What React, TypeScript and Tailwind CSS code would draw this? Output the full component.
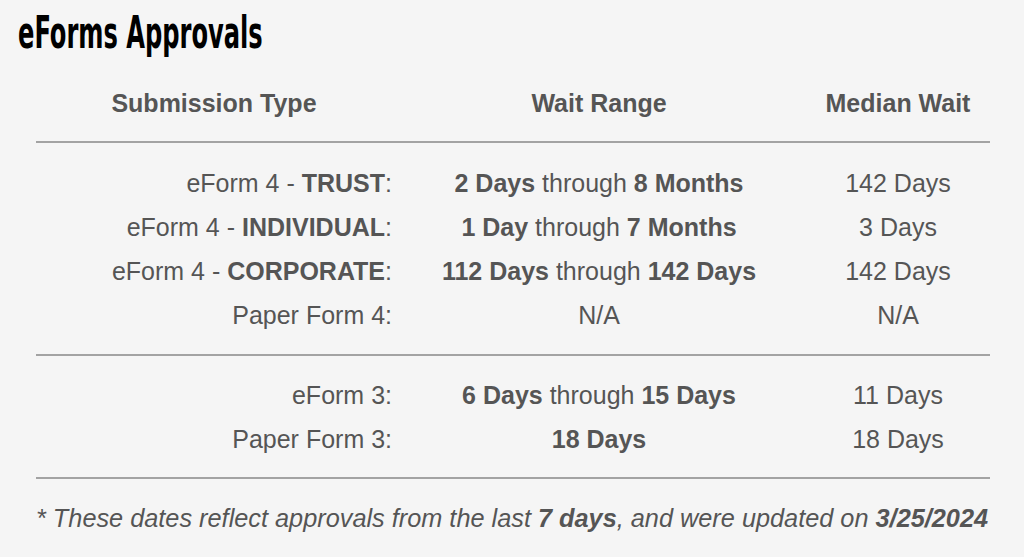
import React from "react";

const rowsA = [
  { label: <>eForm 4 - <b>TRUST</b>:</>, range: <><b>2 Days</b> through <b>8 Months</b></>, median: "142 Days" },
  { label: <>eForm 4 - <b>INDIVIDUAL</b>:</>, range: <><b>1 Day</b> through <b>7 Months</b></>, median: "3 Days" },
  { label: <>eForm 4 - <b>CORPORATE</b>:</>, range: <><b>112 Days</b> through <b>142 Days</b></>, median: "142 Days" },
  { label: <>Paper Form 4:</>, range: <>N/A</>, median: "N/A" },
];
const rowsB = [
  { label: <>eForm 3:</>, range: <><b>6 Days</b> through <b>15 Days</b></>, median: "11 Days" },
  { label: <>Paper Form 3:</>, range: <><b>18 Days</b></>, median: "18 Days" },
];

function Row({ r }: { r: (typeof rowsA)[number] }) {
  return (
    <div className="grid grid-cols-[356px_414px_184px] h-[44px] pt-[2px] items-center">
      <div className="text-right">{r.label}</div>
      <div className="text-center">{r.range}</div>
      <div className="text-center">{r.median}</div>
    </div>
  );
}

export default function App() {
  return (
    <div
      className="w-[1024px] h-[557px] bg-[#f5f5f5] text-[#555555] overflow-hidden"
      style={{ fontFamily: '"Liberation Sans", Arial, sans-serif' }}
    >
      <div className="pt-[11px] pl-[18px]">
        <h1
          className="h-[44px] leading-[44px] text-[44px] font-bold text-black origin-left scale-x-[0.61] whitespace-nowrap"
          style={{ fontFamily: '"DejaVu Sans Condensed", "Liberation Sans", sans-serif' }}
        >
          eForms Approvals
        </h1>
      </div>
      <div className="ml-[36px] w-[954px] mt-[26px] text-[25px]">
        <div className="grid grid-cols-[356px_414px_184px] h-[44px] pt-[2px] items-center font-bold">
          <div className="text-center">Submission Type</div>
          <div className="text-center">Wait Range</div>
          <div className="text-center">Median Wait</div>
        </div>
        <div className="mt-[16px] h-[2px] bg-[#a3a3a3]" />
        <div className="pt-[18px] pb-[17px]">
          {rowsA.map((r, i) => (
            <Row key={i} r={r} />
          ))}
        </div>
        <div className="h-[2px] bg-[#a3a3a3]" />
        <div className="pt-[17px] pb-[16px]">
          {rowsB.map((r, i) => (
            <Row key={i} r={r} />
          ))}
        </div>
        <div className="h-[2px] bg-[#a3a3a3]" />
        <p className="mt-[24px] leading-[30px] italic whitespace-nowrap text-[25.3px]">
          * These dates reflect approvals from the last <b>7 days</b>, and were updated on <b>3/25/2024</b>
        </p>
      </div>
    </div>
  );
}
